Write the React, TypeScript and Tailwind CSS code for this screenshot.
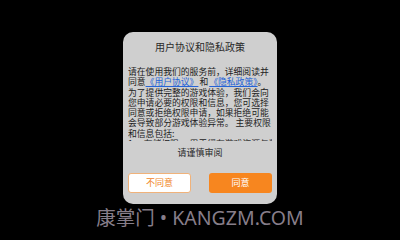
import React from "react";

export default function App() {
  const cjk = { fontFamily: '"Noto Sans CJK SC", "Noto Sans", sans-serif' };
  const lines = [
    "为了提供完整的游戏体验，我们会向",
    "您申请必要的权限和信息，您可选择",
    "同意或拒绝权限申请，如果拒绝可能",
    "会导致部分游戏体验异常。 主要权限",
    "和信息包括:",
  ];
  return (
    <div className="w-[400px] h-[240px] bg-black flex flex-col items-center overflow-hidden" style={cjk}>
      <div className="mt-[32px] w-[154px] h-[172px] rounded-[10px] bg-[#cfcfcf] px-[5px] flex flex-col">
        <div className="pt-[10px] text-[10px] leading-[10px] text-center text-[#2a2a2a]">用户协议和隐私政策</div>
        <div className="mt-[15px] h-[74px] overflow-hidden text-[8.8px] leading-[10.3px] text-[#222] whitespace-nowrap">
          <div>请在使用我们的服务前，详细阅读并</div>
          <div>
            同意<span className="text-[#2563d6] underline">《用户协议》</span>
            <span className="ml-[1px] mr-[1px]">和</span>
            <span className="text-[#2563d6] underline">《隐私政策》</span>。
          </div>
          {lines.map((l) => (
            <div key={l}>{l}</div>
          ))}
          <div>1、 存储权限： 用于缓存游戏资源与数据</div>
        </div>
        <div className="mt-[7px] text-[9px] leading-[10px] text-center text-[#2a2a2a]">请谨慎审阅</div>
        <div className="mt-[15px] flex justify-between">
          <button className="w-[63px] h-[20px] rounded-[3px] bg-white border border-[#f0b27a] text-[#f0862a] text-[9px] leading-[18px]">不同意</button>
          <button className="w-[63px] h-[20px] rounded-[3px] bg-[#f7861f] text-white text-[9px] leading-[20px]">同意</button>
        </div>
      </div>
      <div className="mt-[1px] text-[19.5px] leading-[26px] text-[#877e8a]" style={{ fontFamily: '"Noto Sans", "Noto Sans CJK SC", sans-serif' }}>
        康掌门 • KANGZM.COM
      </div>
    </div>
  );
}
